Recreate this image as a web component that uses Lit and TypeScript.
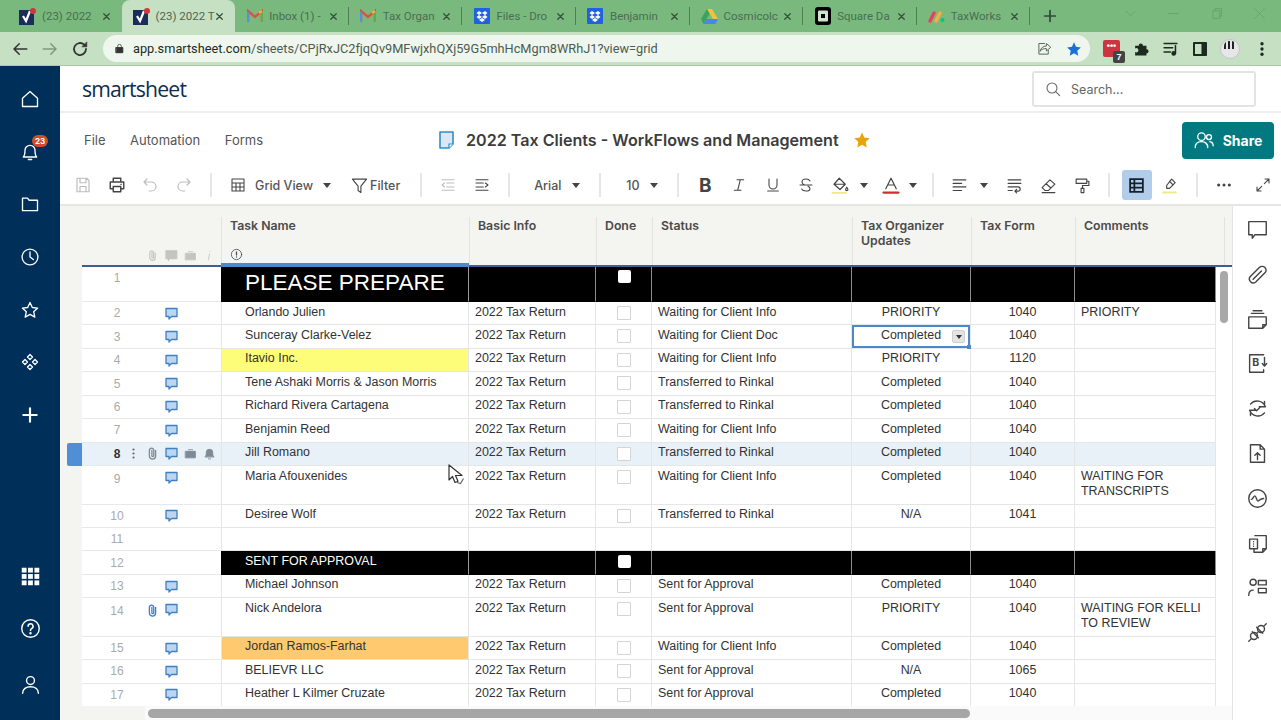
import { LitElement, html, css, svg } from "lit";
import { customElement } from "lit/decorators.js";

const s = (w: number, h: number, body: unknown, cls = "") =>
  html`<svg class=${cls} width=${w} height=${h} viewBox="0 0 24 24" fill="none" stroke="currentColor" stroke-width="1.6" stroke-linecap="round" stroke-linejoin="round">${body}</svg>`;

const ic: Record<string, unknown> = {
  home: svg`<path d="M3 11 12 3l9 8v10H3z"/>`,
  bell: svg`<path d="M4 18c2-2 2-4 2-8a6 6 0 0 1 12 0c0 4 0 6 2 8zM10 21h4"/>`,
  folder: svg`<path d="M3 5h6l2 2.500h10V20H3z"/>`,
  clock: svg`<circle cx="12" cy="12" r="9.500"/><path d="M12 6v6l4 3"/>`,
  star: svg`<path d="M12 3l2.800 6 6.400.7-4.800 4.300 1.400 6.500L12 17.200 6.200 20.500l1.400-6.500L2.800 9.700 9.200 9z"/>`,
  diamond: svg`<path d="M12 3l3 3-3 3-3-3zM6 9l3 3-3 3-3-3zM18 9l3 3-3 3-3-3zM12 15l3 3-3 3-3-3z"/>`,
  plus: svg`<path d="M12 4v16M4 12h16" stroke-width="2.600"/>`,
  apps: svg`<g fill="currentColor" stroke="none"><rect x="2" y="2" width="5.500" height="5.500"/><rect x="9.200" y="2" width="5.500" height="5.500"/><rect x="16.500" y="2" width="5.500" height="5.500"/><rect x="2" y="9.200" width="5.500" height="5.500"/><rect x="9.200" y="9.200" width="5.500" height="5.500"/><rect x="16.500" y="9.200" width="5.500" height="5.500"/><rect x="2" y="16.500" width="5.500" height="5.500"/><rect x="9.200" y="16.500" width="5.500" height="5.500"/><rect x="16.500" y="16.500" width="5.500" height="5.500"/></g>`,
  help: svg`<circle cx="12" cy="12" r="10"/><path d="M9.300 9.500a2.800 2.800 0 1 1 4.200 2.400c-1 .6-1.500 1.100-1.500 2.300" stroke-width="1.800"/><circle cx="12" cy="17.400" r=".6" fill="currentColor"/>`,
  user: svg`<circle cx="12" cy="7.500" r="4.500"/><path d="M3 22c0-5 4-7.500 9-7.500s9 2.500 9 7.500"/>`,
  save: svg`<path d="M4 3h13l3 3v15H4zM8 3v6h8V3M8 21v-7h8v7"/>`,
  print: svg`<path d="M7 8V3h10v5M7 17H3V8h18v9h-4M7 14h10v7H7z" stroke-width="1.900"/><path d="M17 11h1"/>`,
  undo: svg`<path d="M8 4 4 8l4 4M4 8h10a6 6 0 0 1 0 12h-3"/>`,
  redo: svg`<path d="M16 4l4 4-4 4M20 8H10a6 6 0 0 0 0 12h3"/>`,
  grid: svg`<path d="M3 3h18v18H3zM3 9h18M3 15h18M9 9v12M15 9v12"/>`,
  filter: svg`<path d="M2 3h20l-8 10v9l-4-3v-6z"/>`,
  outdent: svg`<path d="M3 4h18M10 9h11M10 15h11M3 20h18M7 9l-4 3 4 3"/>`,
  indent: svg`<path d="M3 4h18M3 9h11M3 15h11M3 20h18M17 9l4 3-4 3"/>`,
  italic: svg`<path d="M9 4h10M5 20h10M14 4l-4 16"/>`,
  underline: svg`<path d="M6 3v9a6 6 0 0 0 12 0V3M4 21h16"/>`,
  strike: svg`<path d="M18 6c-1-2-3-3-6-3-3.500 0-6 1.500-6 4.500 0 2 1.500 3.500 4 4.500M3 12h18M15 14c2 1 3 2 3 3.500C18 20 15.500 21 12 21c-3 0-5.500-1-6.500-3"/>`,
  fill: svg`<path d="M11 3l8 8-7 7-8-7zM4 11h15M21 15c-1 1.500-1.500 2.300-1.500 3a1.500 1.500 0 0 0 3 0c0-.7-.5-1.500-1.500-3z"/><path d="M2 22.500h18" stroke="#efe98a" stroke-width="2.600"/>`,
  text: svg`<path d="M5 17 12 3l7 14M8 12h8"/><path d="M2 22h20" stroke="#c9332c" stroke-width="3"/>`,
  align: svg`<path d="M3 4h18M3 9h12M3 14h18M3 19h12"/>`,
  wrap: svg`<path d="M3 4h18M3 9h18M3 14h14a2.500 2.500 0 0 1 0 6h-4M15 17.500 12.500 20l2.500 2.500M3 19h6"/>`,
  eraser: svg`<path d="M14 4l7 6-9 9H7l-4-4zM8.500 9.500l7 6M3 22h18"/>`,
  roller: svg`<path d="M3 3h15v6H3zM18 6h3v6h-9v4M10 16h4v6h-4z"/>`,
  rows: svg`<path d="M3 3h18v18H3zM3 9h18M3 15h18M9 3v18" stroke="#14202c" stroke-width="2.500" stroke-linecap="butt" stroke-linejoin="miter"/>`,
  marker: svg`<path d="M15 3l5 5-8 8H8v-4zM12 6l5 5"/><path d="M3 22h18" stroke="#efe98a" stroke-width="2.800"/>`,
  more: svg`<g fill="currentColor"><circle cx="4" cy="12" r="1.500"/><circle cx="12" cy="12" r="1.500"/><circle cx="20" cy="12" r="1.500"/></g>`,
  expand: svg`<path d="M14 10 21 3M15 3h6v6M10 14l-7 7M3 15v6h6"/>`,
  search: svg`<circle cx="10.500" cy="10.500" r="7.500"/><path d="M16 16l6 6"/>`,
  people: svg`<circle cx="9" cy="8" r="4.500"/><path d="M1.500 21c0-4.500 3-7 7.500-7s7.500 2.500 7.500 7"/><circle cx="18" cy="8.500" r="3"/><path d="M19 14c2.500.5 4 2.500 4 5"/>`,
  chat: svg`<path d="M2 3h20v15H9l-3 4v-4H2z"/>`,
  chatf: svg`<path d="M2 3h20v15H9l-3 4v-4H2z" fill="currentColor"/>`,
  clip: svg`<path d="M20.500 4a4.500 4.500 0 0 0-6.400 0L3.800 14.300a3 3 0 0 0 0 0 4.400 4.400 0 0 0 6.200 6.200L20.500 10a4.200 4.200 0 0 0 0-6zM7 17.500 16.500 8"/>`,
  vclip: svg`<path d="M17 7v9a5 5 0 0 1-10 0V7a3.500 3.500 0 0 1 7 0v8.500a1.500 1.500 0 0 1-3 0V7" stroke-width="2.100"/>`,
  cards: svg`<path d="M2 9h20v9l-4 4H2zM22 18h-4v4M5 5h14M7 2h10"/>`,
  bdown: svg`<path d="M19 2H3v20h16v-3"/><text x="6" y="15" font-size="12" font-weight="700" fill="currentColor" stroke="none" font-family="Inter">B</text><path d="M20 5v10M17.500 12l2.500 3 2.500-3"/>`,
  sync: svg`<path d="M4 7A10 10 0 0 1 21 10M20 17A10 10 0 0 1 3 14M20 4v6h-6M4 20v-6h6M8.500 12l2.500 2.500 4.500-4.500"/>`,
  upload: svg`<path d="M4 2h11l5 5v15H4zM15 2v5h5M12 19v-8M9 14l3-3 3 3"/>`,
  pulse: svg`<circle cx="12" cy="12" r="10"/><path d="M5 13c2 0 2.500-4 4-4s2 6 3.500 6 2-3 6.500-3"/>`,
  docs: svg`<path d="M9 3h13v15l-4 4H8v-4M22 18h-4v4M3 7h9v11H3zM7.500 10v.1M7.500 12.500v.1M7.500 15v.1"/>`,
  form: svg`<circle cx="7" cy="6" r="3.500"/><path d="M2 21c0-4 2-6 5-6M13 4h9v5h-9zM13 13h9v5h-9z"/>`,
  plug: svg`<circle cx="8" cy="16" r="4"/><circle cx="16" cy="8" r="4"/><path d="M2 22l3-3M22 2l-3 3M11 13l2-2M6 11l7 7M11 6l7 7"/>`,
  briefcase: svg`<path d="M3 8h18v12H3zM8 5h8" fill="currentColor"/>`,
  info: svg`<path d="M13 4v.1M12 9l-2 11"/>`,
  infoc: svg`<circle cx="12" cy="12" r="9.500"/><path d="M12 7v6M12 16.500v.1" stroke-width="2.400"/>`,
  bellf: svg`<path d="M4 18c2-2 2-4 2-8a6 6 0 0 1 12 0c0 4 0 6 2 8zM10 22h4" fill="currentColor"/>`,
  lock: svg`<path d="M5 10h14v11H5zM8 10V7a4 4 0 0 1 8 0v3" /><path d="M5 10h14v11H5z" fill="currentColor"/>`,
  back: svg`<path d="M21 12H4M11 5l-7 7 7 7" stroke-width="2"/>`,
  fwd: svg`<path d="M3 12h17M13 5l7 7-7 7" stroke-width="2"/>`,
  reload: svg`<path d="M20 12a8 8 0 1 1-2.500-5.800" stroke-width="2.400"/><path d="M21 3v6h-6z" fill="currentColor" stroke-width="1"/>`,
  share: svg`<path d="M12 4h-9v17h15v-6M5 16c1-5 5-8 10-8V4l7 6-7 6v-4c-4 0-7 1-10 4z"/>`,
  starf: svg`<path d="M12 2l3 6.800 7.300.8-5.400 5 1.500 7.400L12 18.300 5.600 22l1.500-7.400-5.400-5L9 8.800z" fill="currentColor" stroke="none"/>`,
  puzzle: svg`<path fill="currentColor" stroke="none" d="M3 8h5a3 3 0 1 1 6 0h5v5a3 3 0 1 1 0 6v3H3v-5a3 3 0 1 0 0-5z"/>`,
  music: svg`<path d="M3 5h18M3 11h12M3 17h9M19 8v11" stroke-width="2.200"/><circle cx="16.500" cy="19" r="2.500" fill="currentColor"/>`,
  panel: svg`<path d="M3 3h18v18H3z" stroke-width="3"/><path d="M15 3h6v18h-6z" fill="currentColor"/>`,
  vdots: svg`<g fill="currentColor" stroke="none"><circle cx="12" cy="5" r="2.200"/><circle cx="12" cy="12" r="2.200"/><circle cx="12" cy="19" r="2.200"/></g>`,
  x: svg`<path d="M6 6l12 12M18 6 6 18" stroke-width="2.800"/>`,
  chev: svg`<path d="M4 8l8 8 8-8" stroke-width="1.200"/>`,
  minim: svg`<path d="M3 12h18" stroke-width="1.200"/>`,
  restore: svg`<path d="M6 7h12v14H6zM9 7V3h12v14h-3" stroke-width="1.200"/>`,
  close: svg`<path d="M3 3l18 18M21 3 3 21" stroke-width="1.200"/>`,
};

const fav: Record<string, unknown> = {
  ss: html`<svg width="17" height="17" viewBox="0 0 17 17"><rect width="15" height="15" y="2" fill="#1b2d5a"/><path d="M4 8l3 5 4-10" fill="none" stroke="#fff" stroke-width="2.200"/><circle cx="14" cy="3" r="3" fill="#d3353b"/></svg>`,
  gm: html`<svg width="16" height="14" viewBox="0 0 16 14"><path d="M1 13V2l7 6 7-6v11" fill="none" stroke="#d9543f" stroke-width="2.400"/><path d="M1 13V3" stroke="#5b8fd8" stroke-width="2.400"/><path d="M15 13V3" stroke="#6aa84f" stroke-width="2.400"/><path d="M12 4l3-2" stroke="#e9b93c" stroke-width="2.400"/></svg>`,
  db: html`<svg width="16" height="16" viewBox="0 0 16 16"><rect width="16" height="16" rx="1" fill="#1f62e0"/><path d="M5 3 2.500 5 5 7l3-2zM11 3 8 5l3 2 2.500-2zM5 7 2.500 9 5 11l3-2zM11 7 8 9l3 2 2.500-2zM5 12l3 2 3-2-3-2z" fill="#fff"/></svg>`,
  dr: html`<svg width="17" height="15" viewBox="0 0 17 15"><path d="M6 0h5l6 10h-5z" fill="#f2c23e"/><path d="M6 0 0 10l2.500 5 6-10z" fill="#3aa35c"/><path d="M2.500 15h12L17 10H5.500z" fill="#4a86e8"/></svg>`,
  sq: html`<svg width="16" height="18" viewBox="0 0 16 18"><rect width="16" height="18" rx="3" fill="#000"/><rect x="3" y="3.500" width="10" height="11" rx="1" fill="#cfe3cf"/><rect x="6" y="7" width="4" height="4" fill="#000"/></svg>`,
  mo: html`<svg width="17" height="13" viewBox="0 0 17 13"><path d="M2 11 6 3" stroke="#e2445c" stroke-width="3.400" stroke-linecap="round"/><path d="M8 11l4-8" stroke="#fdab3d" stroke-width="3.400" stroke-linecap="round"/><circle cx="14.500" cy="10" r="2" fill="#00c875"/></svg>`,
};

const tabs = [
  ["ss", "(23) 2022", false],
  ["ss", "(23) 2022 T", true],
  ["gm", "Inbox (1) -", false],
  ["gm", "Tax Organ", false],
  ["db", "Files - Dro", false],
  ["db", "Benjamin", false],
  ["dr", "Cosmicolc", false],
  ["sq", "Square Da", false],
  ["mo", "TaxWorks", false],
] as const;

type R = { n: number; h?: string; a?: number; c?: boolean; name: string; st?: string; tax?: string; form?: string; com?: string; kind?: string; fillc?: string };
const C = "Completed", W = "Waiting for Client Info", T = "Transferred to Rinkal", S = "Sent for Approval";
const rows: R[] = [
  { n: 1, h: "h1", name: "PLEASE PREPARE", kind: "black big" },
  { n: 2, c: true, name: "Orlando Julien", st: W, tax: "PRIORITY", form: "1040", com: "PRIORITY" },
  { n: 3, c: true, name: "Sunceray Clarke-Velez", st: "Waiting for Client Doc", tax: C, form: "1040", kind: "sel" },
  { n: 4, c: true, name: "Itavio Inc.", st: W, tax: "PRIORITY", form: "1120", fillc: "yellow" },
  { n: 5, c: true, name: "Tene Ashaki Morris & Jason Morris", st: T, tax: C, form: "1040" },
  { n: 6, c: true, name: "Richard Rivera Cartagena", st: T, tax: C, form: "1040" },
  { n: 7, c: true, name: "Benjamin Reed", st: W, tax: C, form: "1040" },
  { n: 8, c: true, name: "Jill Romano", st: T, tax: C, form: "1040", kind: "hover" },
  { n: 9, h: "tall", c: true, name: "Maria Afouxenides", st: W, tax: C, form: "1040", com: "WAITING FOR TRANSCRIPTS" },
  { n: 10, c: true, name: "Desiree Wolf", st: T, tax: "N/A", form: "1041" },
  { n: 11, name: "", kind: "empty" },
  { n: 12, name: "SENT FOR APPROVAL", kind: "black" },
  { n: 13, c: true, name: "Michael Johnson", st: S, tax: C, form: "1040" },
  { n: 14, h: "tall", a: 1, c: true, name: "Nick Andelora", st: S, tax: "PRIORITY", form: "1040", com: "WAITING FOR KELLI TO REVIEW" },
  { n: 15, c: true, name: "Jordan Ramos-Farhat", st: W, tax: C, form: "1040", fillc: "orange" },
  { n: 16, c: true, name: "BELIEVR LLC", st: S, tax: "N/A", form: "1065" },
  { n: 17, c: true, name: "Heather L Kilmer Cruzate", st: S, tax: C, form: "1040" },
];

const comment = html`<svg width="13" height="13" viewBox="0 0 13 13"><path d="M1 1.500h11v8H6.500L4 12V9.500H1z" fill="#bcd6f1" stroke="#3f80c2" stroke-width="1.300" stroke-linejoin="round"/></svg>`;

@customElement("app-root")
export class AppRoot extends LitElement {
  static styles = css`
    :host { display: block; width: 1281px; height: 720px; overflow: hidden; position: relative; background: #fff; font-family: Inter, "Liberation Sans", sans-serif; color: #333; }
    svg { display: block; flex: none; }
    .tabstrip { height: 32px; background: #79b97e; display: flex; padding-left: 8px; align-items: stretch; color: #3a4a3a; }
    .tab { width: 113.600px; box-sizing: border-box; display: flex; align-items: center; padding: 0 10px 0 11px; gap: 6px; position: relative; font: 11.500px Roboto, sans-serif; color: #44604a; }
    .tab.active { background: #c5e0c3; border-radius: 8px 8px 0 0; color: #3c4f40; }
    .tab:not(.active):not(.nosep)::after { content: ""; position: absolute; right: 0; top: 7px; bottom: 7px; width: 1px; background: #4f7f53; }
    .favbox { width: 17px; display: flex; justify-content: center; flex: none; }
    .tabtitle { flex: 1; white-space: nowrap; min-width: 0; opacity: .85; }
    .tabx { flex: none; color: #35503a; }
    .tabplus { margin-left: 12px; align-self: center; color: #33483a; }
    .winctl { margin-left: auto; display: flex; align-items: center; gap: 30px; padding: 0 15px 6px 0; color: #5f9a64; }
    .addr { height: 34px; background: #c5e0c3; display: flex; align-items: center; box-sizing: border-box; border-bottom: 1px solid #a9c9a9; color: #333; }
    .nav { display: flex; gap: 12px; margin-left: 11px; }
    .nav .off { color: #7f9a80; }
    .pill { width: 987px; height: 27px; margin-left: 14px; background: #eef6ee; border-radius: 14px; display: flex; align-items: center; box-sizing: border-box; padding: 0 8px 0 11px; flex: none; }
    .url { margin-left: 8px; font: 12.750px Roboto, sans-serif; color: #4d5b50; white-space: nowrap; }
    .url b { font-weight: 400; color: #1f2b22; }
    .pillr { margin-left: auto; display: flex; gap: 14px; align-items: center; color: #5d6a60; }
    .star { color: #1a6fd8; }
    .exts { display: flex; align-items: center; gap: 12.500px; margin-left: 13px; color: #1d2a20; }
    .ext { width: 17px; height: 17px; background: #cc3540; border-radius: 2px; position: relative; color: #fff; font: 700 9px/12px "Liberation Sans", sans-serif; text-align: center; }
    .ext span { position: absolute; right: -5px; bottom: -6px; width: 12px; height: 12px; background: #444; border-radius: 2px; color: #fff; font: 700 9px/12px "Liberation Sans", sans-serif; }
    .ava { width: 20px; height: 20px; border-radius: 50%; background: #e6e6e6; border: 1px solid #c6c6c6; box-sizing: border-box; position: relative; overflow: hidden; }
    .ava::before { content: ""; position: absolute; left: 3px; top: 1px; width: 12px; height: 8px; background: repeating-linear-gradient(90deg, #222 0 2px, #e6e6e6 2px 4px); border-radius: 5px 5px 0 0; }
    .main { display: flex; height: 654px; }
    .side { width: 60px; background: #003059; color: #fff; display: flex; flex-direction: column; align-items: center; flex: none; padding: 20px 0 25.500px; box-sizing: border-box; height: 654px; }
    .sicon { height: 52.700px; display: flex; align-items: flex-start; justify-content: center; width: 100%; position: relative; padding-top: 3px; box-sizing: border-box; flex: none; }
    .sicon.last { height: 24px; margin-top: 2.500px; }
    .badge { position: absolute; left: 32px; top: -4px; background: #d44a2c; color: #fff; font: 700 8px/12px Inter, sans-serif; border-radius: 7px; padding: 0 3px; }
    .spacer { flex: 1; }
    .content { flex: 1; min-width: 0; display: flex; flex-direction: column; }
    .top { height: 47px; display: flex; align-items: center; border-bottom: 2px solid #eeeeee; box-sizing: border-box; }
    .logo { margin-left: 22px; font: 400 21.200px "Open Sans", sans-serif; letter-spacing: -0.800px; color: #0e2f50; }
    .search { margin: 1px 25px 0 auto; width: 224px; height: 36px; border: 2px solid #e3e3e3; border-radius: 3px; box-sizing: border-box; display: flex; align-items: center; padding-left: 11px; gap: 10px; color: #666; font: 12.500px Inter, sans-serif; }
    .titlebar { height: 54px; display: flex; align-items: center; flex: none; }
    .menu { margin-left: 24px; display: flex; gap: 24.500px; font: 13px Inter, sans-serif; color: #555; width: 354px; }
    .title { margin-left: 10px; font: 600 16.100px Inter, sans-serif; color: #3c3c3c; white-space: nowrap; }
    .tstar { margin-left: 14px; color: #e5a50a; }
    .sharebtn { margin-left: auto; margin-right: 7px; width: 92px; height: 37px; background: #007a80; border-radius: 4px; color: #fff; display: flex; align-items: center; justify-content: center; gap: 9px; font: 700 14px Inter, sans-serif; }
    .toolbar { height: 40px; display: flex; align-items: center; border-bottom: 2px solid #e6e6e6; box-sizing: border-box; color: #444; padding-left: 11px; flex: none; margin-top: -1px; }
    .tg { display: flex; align-items: center; gap: 9.700px; flex: none; }
    .tg.flat { gap: 0; box-sizing: border-box; }
    .tb { width: 24px; height: 24px; display: flex; align-items: center; justify-content: center; flex: none; }
    .off { color: #bdbdbd; }
    .sep { width: 2px; height: 24px; background: #e6e6e4; margin: 0 14px; flex: none; }
    .tt { font: 500 12.500px Inter, sans-serif; color: #555; white-space: nowrap; flex: none; }
    .caret { width: 0; height: 0; border: 4px solid transparent; border-top: 5px solid #444; border-bottom: 0; flex: none; }
    .bold { font: 700 19px Inter, sans-serif; color: #444; }
    .active-tb { background: #b2cde9; border-radius: 3px; width: 30px; height: 30px; }
    .gv { margin-left: 5px; width: 62px; } .gvc { margin-left: 6px; }
    .flt { margin-left: 16px; } .fltt { margin-left: -1px; }
    .m15 { margin-left: 15px; } .m14 { margin-left: 14.300px; } .m20 { margin-left: 20px; } .m0 { margin-left: 0; }
    .fam { width: 75px; padding-left: 10px; } .famt { width: 31px; } .famc { margin-left: 7px; }
    .size { width: 62px; padding-left: 11px; } .sizet { width: 22px; } .sizec { margin-left: 2px; }
    .fillc { margin-left: 8px; }
    .txt { margin-left: 11px; } .txtc { margin-left: 6px; }
    .sepal { margin: 0 14px 0 15px; }
    .alc { margin-left: 8px; }
    .sep5 { margin: 0 12px 0 13.600px; }
    .mark { margin-left: 6px; }
    .sheet { flex: 1; min-height: 0; display: flex; }
    .gridwrap { width: 1172px; flex: none; background: #f4f4f0; display: flex; flex-direction: column; }
    .head { height: 61px; flex: none; display: grid; grid-template-columns: 139px 248px 127px 56px 200px 119px 104px 141px 16px; margin-left: 22px; }
    .hc { border-bottom: 2px solid #3d5f98; padding-top: 11px; box-sizing: border-box; display: flex; min-width: 0; }
    .hi { flex: 1; border-left: 1px solid #e3e3df; padding: 1px 8px; font: 600 12.300px/15px Inter, sans-serif; color: #4b4b4b; }
    .hc.task { border-bottom: 4px solid #4d88c9; }
    .hc.noline .hi { border-left: 0; }
    .hc.end .hi { padding: 0; margin-left: 8px; }
    .hicons { flex: 1; display: flex; justify-content: flex-end; align-items: flex-end; gap: 6px; padding: 0 5.500px 3px 0; color: #c4c4c0; }
    .task-i { display: block; color: #555; margin-top: 14.500px; }
    .body { flex: 1; min-height: 0; display: flex; }
    .rows { margin-left: 7px; width: 1149px; overflow: hidden; flex: none; }
    .vtrack { flex: 1; background: #fff; padding: 4px 0 0 4px; box-sizing: border-box; }
    .vthumb { width: 8px; height: 52px; background: #a8a8a8; border-radius: 4px; }
    .row { display: grid; grid-template-columns: 15px 139px 248px 127px 56px 200px 119px 104px 141px; height: 23.450px; font: 12.450px/15px "Liberation Sans", Arial, sans-serif; color: #333; }
    .row.h1 { height: 35px; }
    .row.tall { height: 38.500px; }
    .handle { min-width: 0; }
    .row.hover .handle { background: #4f8fd6; border-radius: 2px 0 0 2px; }
    .gut { background: #fff; border-bottom: 1px solid #e8e8e8; display: flex; align-items: center; padding-left: 20px; box-sizing: border-box; overflow: hidden; }
    .row.h1 .gut { align-items: flex-start; padding-top: 3px; }
    .row.tall .gut { align-items: flex-start; padding-top: 5px; }
    .num { width: 30px; text-align: center; color: #aaa; flex: none; margin-top: 1px; font-size: 12px; }
    .dots { width: 10.500px; flex: none; color: #666; }
    .slot { width: 19px; display: flex; justify-content: center; flex: none; color: #7d8a96; }
    .slot.blue { color: #3f80c2; }
    .row.hover .gut, .row.hover .cell { background: #e9f1f8; }
    .row.hover .num { color: #333; font-weight: 700; }
    .cell { border-right: 1px solid #e6e6e6; border-bottom: 1px solid #e6e6e6; padding: 2.500px 6px 0; box-sizing: border-box; min-width: 0; white-space: nowrap; background: #fff; position: relative; }
    .cell.wrap { white-space: normal; }
    .cell.name { padding-left: 23px; border-left: 1px solid #e6e6e6; }
    .cell.ctr { text-align: center; }
    .cell.yellow { background: #fdfd7a; }
    .cell.orange { background: #fec96f; }
    .row.black .cell { background: #000; color: #fff; border-right-color: #8c8c8c; border-bottom-color: #000; }
    .row.black .cell.name { border-left-color: #000; border-right-color: #9a9a9a; }
    .row.big .cell.name { font-size: 22.500px; line-height: 28px; padding-top: 2px; }
    .chk { width: 12px; height: 12px; border: 1px solid #d4d4d4; border-radius: 1px; margin: 1px auto 0; background: #fff; }
    .row.black .chk { border: 0; width: 13px; height: 13px; border-radius: 2px; margin-top: 1px; }
    .row.big .chk { margin-top: 0; }
    .cell.chkc { padding: 3px 0 0 1px; }
    .cell.sel { box-shadow: inset 0 0 0 2px #4a8ac9; }
    .ddbtn { position: absolute; right: 5px; top: 5px; width: 13px; height: 13px; background: #e4e4e2; border: 1px solid #cfcfcf; border-radius: 2px; box-sizing: border-box; display: flex; align-items: center; justify-content: center; }
    .ddbtn i { border: 3px solid transparent; border-top: 4px solid #333; border-bottom: 0; }
    .dh { position: absolute; right: -1px; bottom: -1px; width: 4px; height: 4px; background: #4a8ac9; }
    .hbar { height: 14px; flex: none; display: flex; align-items: center; background: linear-gradient(90deg, #f4f4f0 85px, #fafafa 85px); }
    .hthumb { margin-left: 88px; width: 822px; height: 9px; border-radius: 5px; background: #a6a6a6; }
    .rail { flex: 1; border-left: 1px solid #e4e4e4; display: flex; flex-direction: column; align-items: center; color: #444; padding-top: 12px; box-sizing: border-box; }
    .ri { height: 44.800px; flex: none; display: flex; align-items: flex-start; justify-content: center; padding-top: 1px; box-sizing: border-box; }
    .cursor { position: absolute; left: 447px; top: 464px; }
  `;

  private tb(n: string, size = 18, off = false) {
    return html`<span class="tb ${off ? "off" : ""}">${s(size, size, ic[n])}</span>`;
  }

  render() {
    return html`
      <div class="tabstrip">
        ${tabs.map(([f, t, a], i) => html`<div class="tab ${a ? "active" : ""} ${i < 2 ? "nosep" : ""}"><span class="favbox">${fav[f]}</span><span class="tabtitle">${t}</span>${s(11, 11, ic.x, "tabx")}</div>`)}
        <span class="tabplus">${s(16, 16, ic.plus)}</span>
        <div class="winctl">${s(13, 13, ic.chev)}${s(13, 13, ic.minim)}${s(13, 13, ic.restore)}${s(13, 13, ic.close)}</div>
      </div>
      <div class="addr">
        <div class="nav">${s(18, 18, ic.back)}${s(18, 18, ic.fwd, "off")}${s(18, 18, ic.reload)}</div>
        <div class="pill">
          ${s(11, 11, ic.lock)}
          <span class="url"><b>app.smartsheet.com</b>/sheets/CPjRxJC2fjqQv9MFwjxhQXj59G5mhHcMgm8WRhJ1?view=grid</span>
          <div class="pillr">${s(15, 15, ic.share)}<span class="star">${s(16, 16, ic.starf)}</span></div>
        </div>
        <div class="exts">
          <div class="ext">•••<span>7</span></div>
          <span>${s(17, 17, ic.puzzle)}</span>
          <span>${s(17, 17, ic.music)}</span>
          <span>${s(16, 16, ic.panel)}</span>
          <span class="ava"></span>
          <span>${s(18, 18, ic.vdots)}</span>
        </div>
      </div>
      <div class="main">
        <nav class="side">
          <div class="sicon">${s(20, 20, ic.home)}</div>
          <div class="sicon">${s(20, 20, ic.bell)}<span class="badge">23</span></div>
          <div class="sicon">${s(20, 20, ic.folder)}</div>
          <div class="sicon">${s(20, 20, ic.clock)}</div>
          <div class="sicon">${s(20, 20, ic.star)}</div>
          <div class="sicon">${s(20, 20, ic.diamond)}</div>
          <div class="sicon">${s(20, 20, ic.plus)}</div>
          <div class="spacer"></div>
          <div class="sicon">${s(21, 21, ic.apps)}</div>
          <div class="sicon">${s(21, 21, ic.help)}</div>
          <div class="sicon last">${s(21, 21, ic.user)}</div>
        </nav>
        <div class="content">
          <div class="top">
            <span class="logo">smartsheet</span>
            <div class="search">${s(16, 16, ic.search)}<span>Search...</span></div>
          </div>
          <div class="titlebar">
            <div class="menu"><span>File</span><span>Automation</span><span>Forms</span></div>
            <svg width="18" height="18" viewBox="0 0 18 18"><path d="M2 1h13v12l-4 4H2z" fill="#dbe6f7" stroke="#2f8fc6" stroke-width="1.600" stroke-linejoin="round"/><path d="M15 13h-4v4" fill="#fff" stroke="#2f8fc6" stroke-width="1.200"/></svg>
            <span class="title">2022 Tax Clients - WorkFlows and Management</span>
            <span class="tstar">${s(18, 18, ic.starf)}</span>
            <div class="sharebtn">${s(20, 20, ic.people)}<span>Share</span></div>
          </div>
          <div class="toolbar">
            <div class="tg">${this.tb("save", 18, true)}${this.tb("print")}${this.tb("undo", 18, true)}${this.tb("redo", 18, true)}</div>
            <span class="sep"></span>
            <div class="tg flat">
              ${this.tb("grid", 16)}<span class="tt gv">Grid View</span><span class="caret gvc"></span>
              <span class="tb flt">${s(17, 17, ic.filter)}</span><span class="tt fltt">Filter</span>
            </div>
            <span class="sep m20"></span>
            <div class="tg">${this.tb("outdent", 16, true)}${this.tb("indent", 16)}</div>
            <span class="sep m14"></span>
            <div class="tg flat fam"><span class="tt famt">Arial</span><span class="caret famc"></span></div>
            <span class="sep m0"></span>
            <div class="tg flat size"><span class="tt sizet">10</span><span class="caret sizec"></span></div>
            <span class="sep m0"></span>
            <div class="tg">
              <span class="tb bold">B</span>${this.tb("italic", 16)}${this.tb("underline", 16)}${this.tb("strike", 16)}${this.tb("fill", 18)}
            </div>
            <span class="caret fillc"></span>
            <span class="tb txt">${s(18, 18, ic.text)}</span>
            <span class="caret txtc"></span>
            <span class="sep sepal"></span>
            ${this.tb("align", 17)}<span class="caret alc"></span>
            <div class="tg m15">${this.tb("wrap", 17)}${this.tb("eraser", 17)}${this.tb("roller", 17)}</div>
            <span class="sep sep5"></span>
            <span class="tb active-tb">${s(17, 17, ic.rows)}</span>
            <span class="tb mark">${s(17, 17, ic.marker)}</span>
            <span class="sep"></span>
            ${this.tb("more", 16)}
            <span class="tb m15">${s(16, 16, ic.expand)}</span>
          </div>
          <div class="sheet">
            <div class="gridwrap">
              <div class="head">
                <div class="hc noline"><div class="hicons">${s(13, 13, ic.vclip)}${s(13, 13, ic.chatf)}${s(13, 13, ic.briefcase)}${s(13, 13, ic.info)}</div></div>
                <div class="hc task"><div class="hi">Task Name<span class="task-i">${s(13, 13, ic.infoc)}</span></div></div>
                <div class="hc"><div class="hi">Basic Info</div></div>
                <div class="hc"><div class="hi">Done</div></div>
                <div class="hc"><div class="hi">Status</div></div>
                <div class="hc"><div class="hi">Tax Organizer Updates</div></div>
                <div class="hc"><div class="hi">Tax Form</div></div>
                <div class="hc"><div class="hi">Comments</div></div>
                <div class="hc end"><div class="hi"></div></div>
              </div>
              <div class="body">
                <div class="rows">${rows.map((r) => this.row(r))}</div>
                <div class="vtrack"><div class="vthumb"></div></div>
              </div>
              <div class="hbar"><div class="hthumb"></div></div>
            </div>
            <aside class="rail">
              ${["chat", "clip", "cards", "bdown", "sync", "upload", "pulse", "docs", "form", "plug"].map((n) => html`<div class="ri">${s(21, 21, ic[n])}</div>`)}
            </aside>
          </div>
        </div>
      </div>
      <svg class="cursor" width="20" height="22" viewBox="0 0 20 22"><path d="M2 1v15l3.500-3.500 2.500 6 3-1.200-2.500-5.800H15z" fill="#fff" stroke="#333" stroke-width="1.200" stroke-linejoin="round"/><path d="M10 18.500l3.500 1 3-5" fill="none" stroke="#666" stroke-width="1.200"/></svg>
    `;
  }

  private row(r: R) {
    const plain = r.kind === "empty";
    const isBlack = r.kind?.includes("black");
    const hover = r.kind === "hover";
    const sel = r.kind === "sel";
    return html`<div class="row ${r.h ?? ""} ${r.kind ?? ""}">
      <div class="handle"></div>
      <div class="gut">
        <span class="num">${r.n}</span>
        <span class="dots">${hover ? html`<svg width="3" height="11" viewBox="0 0 3 11"><g fill="#666"><circle cx="1.500" cy="1.500" r="1.100"/><circle cx="1.500" cy="5.500" r="1.100"/><circle cx="1.500" cy="9.500" r="1.100"/></g></svg>` : ""}</span>
        <span class="slot ${r.a ? "blue" : ""}">${r.a || hover ? s(15, 15, ic.vclip) : ""}</span>
        <span class="slot">${r.c ? comment : ""}</span>
        <span class="slot">${hover ? s(13, 13, ic.briefcase) : ""}</span>
        <span class="slot">${hover ? s(13, 13, ic.bellf) : ""}</span>
      </div>
      <div class="cell name ${r.fillc ?? ""}">${r.name}</div>
      <div class="cell">${plain || isBlack ? "" : "2022 Tax Return"}</div>
      <div class="cell chkc">${plain ? "" : html`<div class="chk"></div>`}</div>
      <div class="cell">${r.st ?? ""}</div>
      <div class="cell ctr ${sel ? "sel" : ""}">${r.tax ?? ""}${sel ? html`<span class="ddbtn"><i></i></span><span class="dh"></span>` : ""}</div>
      <div class="cell ctr">${r.form ?? ""}</div>
      <div class="cell wrap">${r.com ?? ""}</div>
    </div>`;
  }
}
